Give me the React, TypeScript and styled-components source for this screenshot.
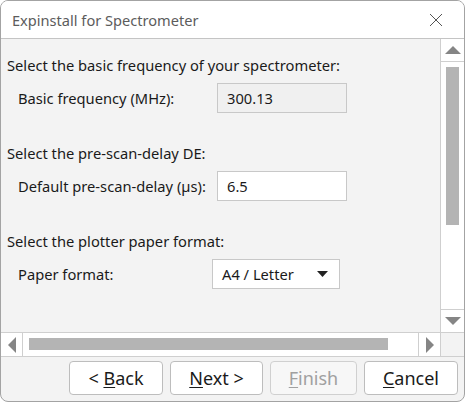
import React from "react";
import styled, { createGlobalStyle } from "styled-components";

const GlobalStyle = createGlobalStyle`
  html, body {
    margin: 0;
    padding: 0;
    background: #ffffff;
  }
  * {
    box-sizing: border-box;
  }
`;

const font = `"Noto Sans", "Open Sans", "Liberation Sans", sans-serif`;

const Window = styled.div`
  width: 465px;
  height: 402px;
  border: 1px solid #a3a3a3;
  border-radius: 8px;
  overflow: hidden;
  display: flex;
  flex-direction: column;
  background: #f3f3f3;
  font-family: ${font};
  color: #1a1a1a;
`;

const TitleBar = styled.div`
  height: 38px;
  flex: none;
  display: flex;
  align-items: center;
  justify-content: space-between;
  padding: 0 21px 0 11px;
  background: #ffffff;
  border-bottom: 1px solid #c4c4c4;
`;

const Title = styled.span`
  font-size: 14.6px;
  color: #5c5c5c;
`;

const CloseButton = styled.svg`
  width: 14px;
  height: 14px;
`;

const ScrollView = styled.div`
  flex: none;
  height: 318px;
  display: grid;
  grid-template-columns: 1fr 24px;
  grid-template-rows: 1fr 24px;
  border-bottom: 1px solid #cfcfcf;
`;

const Content = styled.div`
  padding: 16px 0 0 6px;
  overflow: hidden;
`;

const Section = styled.div`
  margin-bottom: 30px;
`;

const Heading = styled.div`
  font-size: 14.7px;
  line-height: 20px;
  margin-bottom: 8px;
`;

const Row = styled.div`
  display: grid;
  grid-template-columns: 199px auto;
  align-items: center;
  padding-left: 11px;
`;

const Label = styled.span`
  font-size: 14.7px;
`;

const Field = styled.div<{ $readOnly?: boolean }>`
  width: 130px;
  height: 30px;
  display: flex;
  align-items: center;
  padding-left: 9px;
  font-size: 14.7px;
  background: ${(p) => (p.$readOnly ? "#f0f0f0" : "#ffffff")};
  border: 1px solid #c8c8c8;
`;

const Select = styled.div`
  width: 128px;
  height: 30px;
  margin-left: -5px;
  display: flex;
  align-items: center;
  justify-content: space-between;
  padding: 0 11px 0 9px;
  font-size: 14.7px;
  background: #ffffff;
  border: 1px solid #c8c8c8;
`;

const VScroll = styled.div`
  grid-row: 1;
  grid-column: 2;
  display: flex;
  flex-direction: column;
  background: #ffffff;
  border-left: 1px solid #cfcfcf;
`;

const HScroll = styled.div`
  grid-row: 2;
  grid-column: 1;
  display: flex;
  background: #ffffff;
  border-top: 1px solid #cfcfcf;
`;

const Corner = styled.div`
  grid-row: 2;
  grid-column: 2;
  background: #f3f3f3;
  border-top: 1px solid #cfcfcf;
  border-left: 1px solid #cfcfcf;
`;

const ArrowBox = styled.div<{ $side: "top" | "bottom" | "left" | "right" }>`
  flex: none;
  width: ${(p) => (p.$side === "left" || p.$side === "right" ? "22px" : "auto")};
  height: ${(p) => (p.$side === "top" || p.$side === "bottom" ? "23px" : "auto")};
  display: flex;
  align-items: center;
  justify-content: center;
  ${(p) => `border-${p.$side === "top" ? "bottom" : p.$side === "bottom" ? "top" : p.$side === "left" ? "right" : "left"}: 1px solid #cfcfcf;`}
`;

const Track = styled.div<{ $vertical?: boolean }>`
  flex: 1;
  display: flex;
  flex-direction: ${(p) => (p.$vertical ? "column" : "row")};
  padding: ${(p) => (p.$vertical ? "5px 5px" : "5px 6px")};
`;

const Thumb = styled.div<{ $size: number; $vertical?: boolean }>`
  background: #b4b4b4;
  ${(p) => (p.$vertical ? `height: ${p.$size}px; width: 13px; margin: 0 auto;` : `width: ${p.$size}px; height: 12px;`)}
`;

const Footer = styled.div`
  flex: 1;
  display: flex;
  justify-content: flex-end;
  align-items: center;
  gap: 7px;
  padding: 0 6px 2px 0;
`;

const Button = styled.button<{ $width: number }>`
  width: ${(p) => p.$width}px;
  height: 34px;
  border: 1px solid #bdbdbd;
  border-radius: 4px;
  background: #ffffff;
  font-family: ${font};
  font-size: 18px;
  color: #1a1a1a;
  padding: 0;

  &:disabled {
    color: #a0a0a0;
    border-color: #d0d0d0;
    background: #f7f7f7;
  }

  u {
    text-underline-offset: 2px;
  }
`;

const Triangle = ({ dir }: { dir: "up" | "down" | "left" | "right" }) => {
  const pts = {
    up: "0,8 8,0 16,8",
    down: "0,0 16,0 8,8",
    left: "8,0 8,16 0,8",
    right: "0,0 8,8 0,16",
  }[dir];
  const vertical = dir === "up" || dir === "down";
  return (
    <svg width={vertical ? 16 : 8} height={vertical ? 8 : 16} viewBox={vertical ? "0 0 16 8" : "0 0 8 16"}>
      <polygon points={pts} fill="#858585" />
    </svg>
  );
};

export default function App() {
  return (
    <>
      <GlobalStyle />
      <Window>
        <TitleBar>
          <Title>Expinstall for Spectrometer</Title>
          <CloseButton viewBox="0 0 14 14">
            <path d="M1 1 L13 13 M13 1 L1 13" stroke="#555" strokeWidth="1" />
          </CloseButton>
        </TitleBar>
        <ScrollView>
          <Content>
            <Section>
              <Heading>Select the basic frequency of your spectrometer:</Heading>
              <Row>
                <Label>Basic frequency (MHz):</Label>
                <Field $readOnly>300.13</Field>
              </Row>
            </Section>
            <Section>
              <Heading>Select the pre-scan-delay DE:</Heading>
              <Row>
                <Label>Default pre-scan-delay (µs):</Label>
                <Field>6.5</Field>
              </Row>
            </Section>
            <Section>
              <Heading>Select the plotter paper format:</Heading>
              <Row>
                <Label>Paper format:</Label>
                <Select>
                  <span>A4 / Letter</span>
                  <svg width="11" height="6" viewBox="0 0 11 6">
                    <polygon points="0,0 11,0 5.5,6" fill="#222" />
                  </svg>
                </Select>
              </Row>
            </Section>
          </Content>
          <VScroll>
            <ArrowBox $side="top">
              <Triangle dir="up" />
            </ArrowBox>
            <Track $vertical>
              <Thumb $vertical $size={158} />
            </Track>
            <ArrowBox $side="bottom">
              <Triangle dir="down" />
            </ArrowBox>
          </VScroll>
          <HScroll>
            <ArrowBox $side="left">
              <Triangle dir="left" />
            </ArrowBox>
            <Track>
              <Thumb $size={359} />
            </Track>
            <ArrowBox $side="right">
              <Triangle dir="right" />
            </ArrowBox>
          </HScroll>
          <Corner />
        </ScrollView>
        <Footer>
          <Button $width={94}>
            &lt; <u>B</u>ack
          </Button>
          <Button $width={93}>
            <u>N</u>ext &gt;
          </Button>
          <Button $width={87} disabled>
            <u>F</u>inish
          </Button>
          <Button $width={94}>
            <u>C</u>ancel
          </Button>
        </Footer>
      </Window>
    </>
  );
}
